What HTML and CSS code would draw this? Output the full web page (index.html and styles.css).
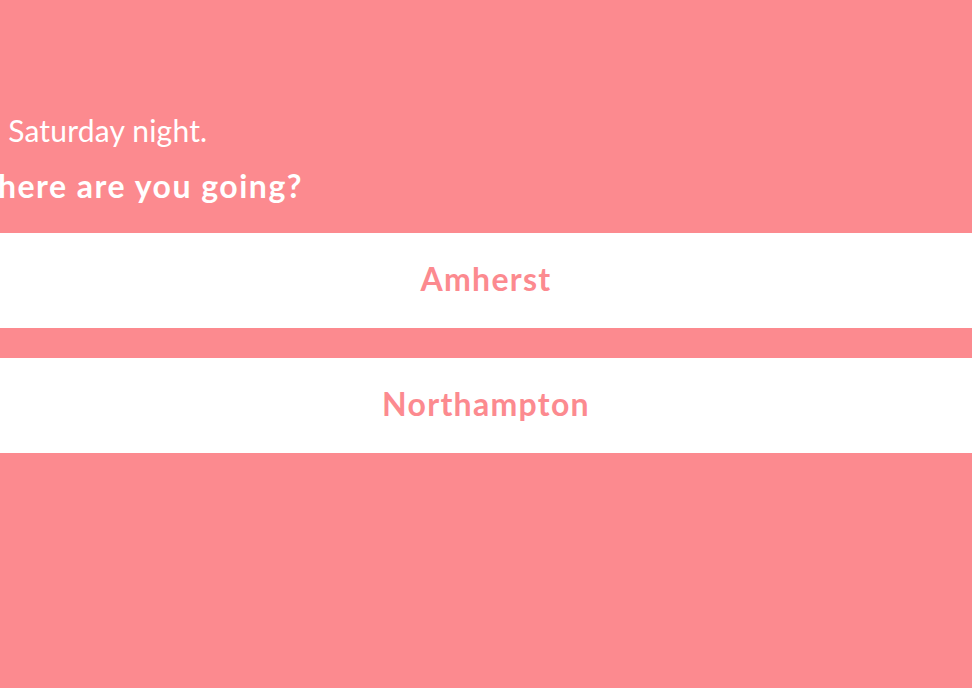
FILE: index.html
```html
<!DOCTYPE html>
<html>
<head>
<meta charset="utf-8">
<link rel="stylesheet" href="styles.css">
</head>
<body>
<main class="page">
  <section class="intro">
    <p class="lead"><span class="hidden-part">It’s </span>Saturday night.</p>
    <h1 class="question">Where are you going?</h1>
  </section>
  <nav class="choices">
    <button class="choice">Amherst</button>
    <button class="choice">Northampton</button>
  </nav>
</main>
</body>
</html>
```
FILE: styles.css
```css
html, body {
  margin: 0;
  padding: 0;
  height: 100%;
  overflow: hidden;
}
body {
  background: #fc8a8f;
  font-family: "Lato", "Noto Sans", sans-serif;
  color: #ffffff;
}
.page {
  display: flex;
  flex-direction: column;
}
.intro {
  padding-top: 110px;
  box-sizing: border-box;
  height: 233px;
}
.lead {
  margin: 0 0 0 -38px;
  font-size: 30px;
  font-weight: 400;
  line-height: 40px;
  white-space: nowrap;
  letter-spacing: 0.2px;
}
.question {
  margin: 16px 0 0 -37px;
  font-size: 32px;
  font-weight: 700;
  line-height: 40px;
  white-space: nowrap;
  letter-spacing: 1.5px;
}
.choices {
  display: flex;
  flex-direction: column;
  gap: 30px;
}
.choice {
  display: block;
  width: 100%;
  height: 95px;
  border: 0;
  background: #ffffff;
  color: #fc8a8f;
  font-family: inherit;
  font-size: 32px;
  font-weight: 700;
  letter-spacing: 1.3px;
  padding: 0 0 4px;
}
```
